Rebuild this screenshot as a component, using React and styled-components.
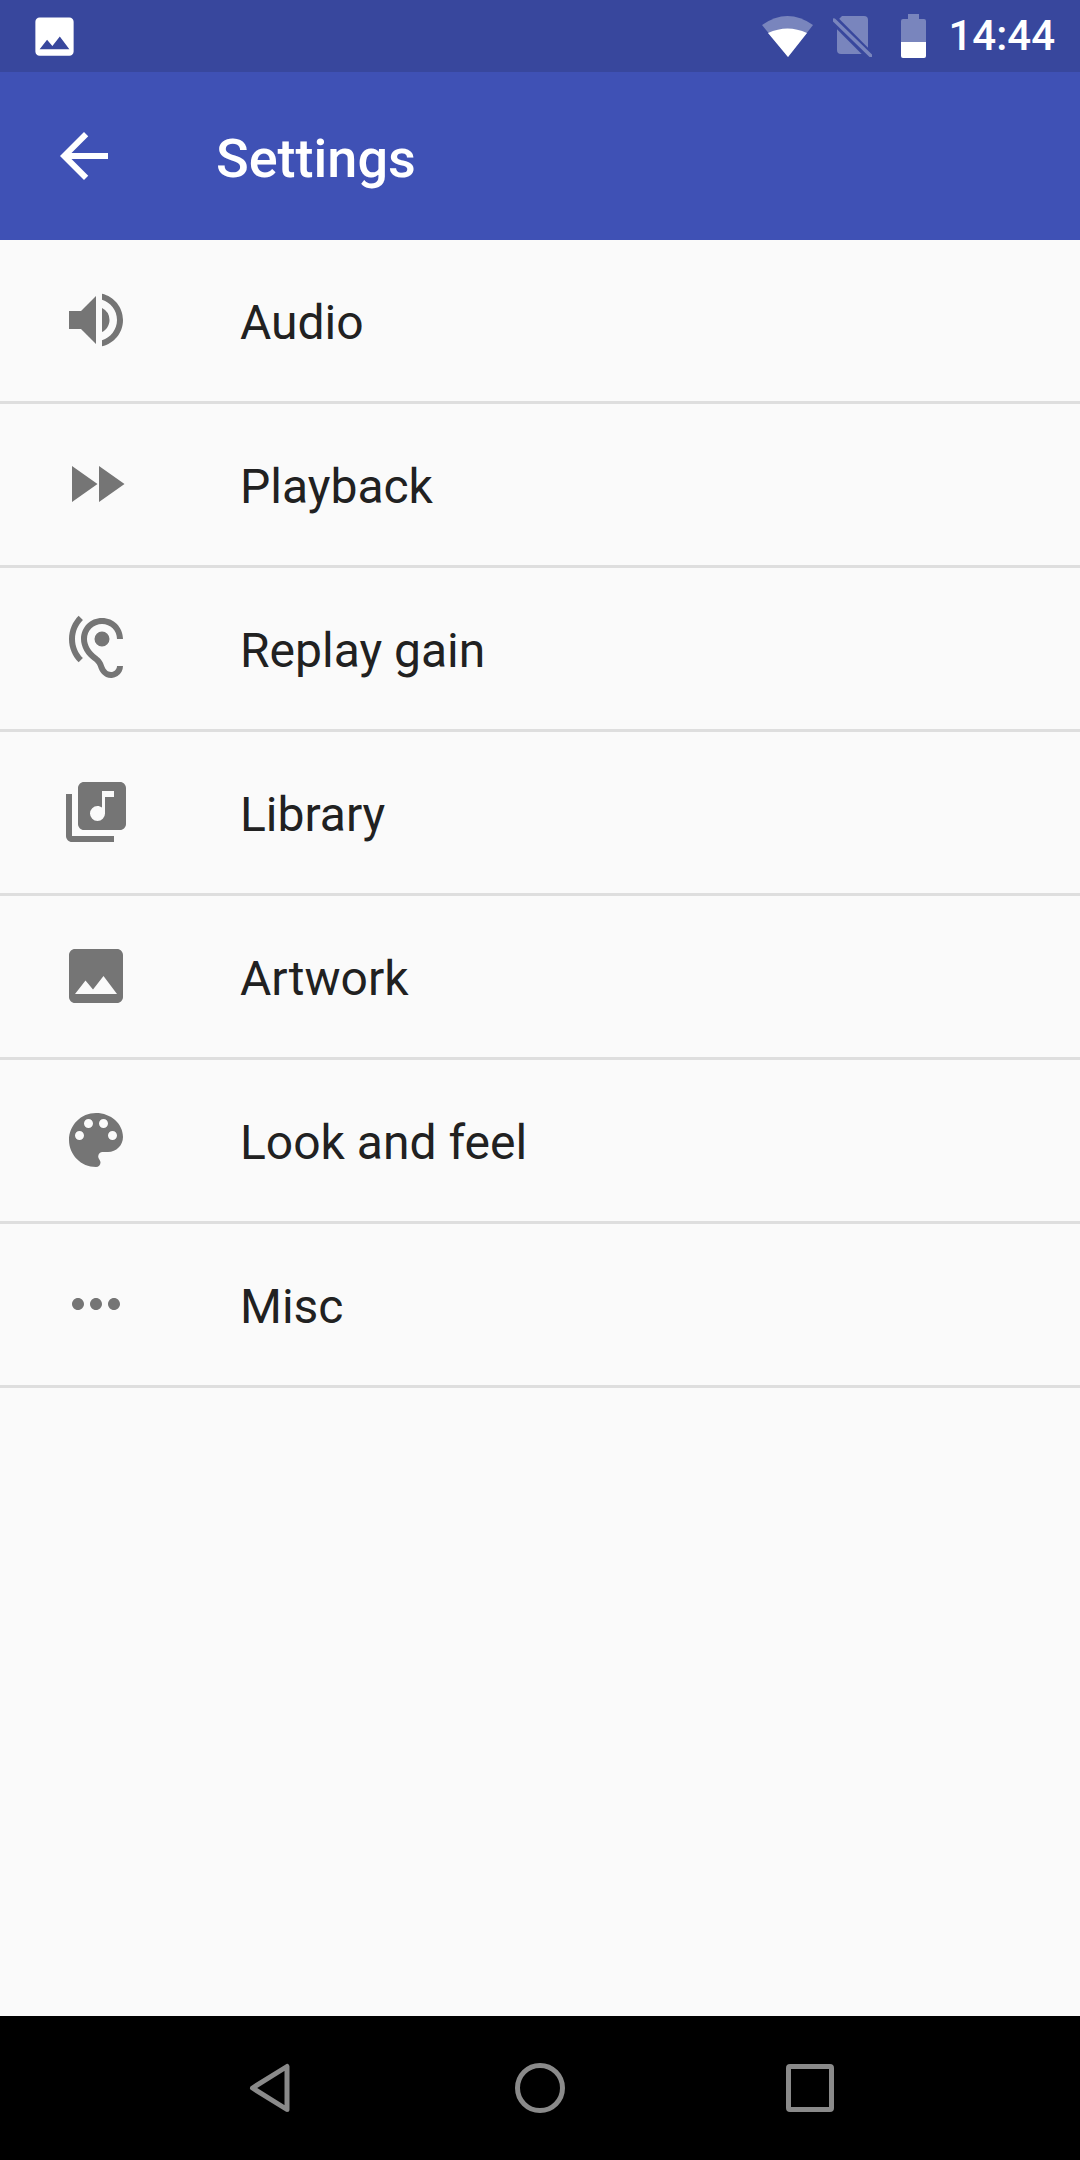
import React from "react";
import styled, { createGlobalStyle } from "styled-components";
import {
  MdArrowBack,
  MdVolumeUp,
  MdFastForward,
  MdHearing,
  MdLibraryMusic,
  MdImage,
  MdMoreHoriz,
} from "react-icons/md";

const Global = createGlobalStyle`
  html, body { margin: 0; padding: 0; background: #fafafa; }
  * { box-sizing: border-box; }
`;

const Screen = styled.div`
  width: 1080px;
  height: 2160px;
  display: flex;
  flex-direction: column;
  background: #fafafa;
  font-family: Roboto, "Liberation Sans", sans-serif;
  overflow: hidden;
`;

const StatusBar = styled.div`
  height: 72px;
  flex: none;
  display: flex;
  align-items: center;
  padding: 0 25px 0 29px;
  background: #38479d;
  color: #fff;
`;

const StatusTray = styled.div`
  margin-left: auto;
  display: flex;
  align-items: center;
`;

const StatusGlyph = styled.svg`
  display: block;
  flex: none;
  margin-right: ${(p) => p.$gap}px;
`;

const Clock = styled.span`
  font-size: 42px;
  line-height: 72px;
  font-weight: 500;
`;

const Toolbar = styled.header`
  height: 168px;
  flex: none;
  display: flex;
  align-items: center;
  padding-left: 48px;
  background: #3f51b5;
  color: #fff;
`;

const BackButton = styled.div`
  width: 72px;
  height: 72px;
  margin-right: 96px;
  display: flex;
`;

const Title = styled.h1`
  margin: 0;
  padding-top: 6px;
  font-size: 54px;
  line-height: 72px;
  font-weight: 500;
`;

const List = styled.main`
  flex: 1;
  display: flex;
  flex-direction: column;
`;

const Row = styled.div`
  height: 164px;
  flex: none;
  display: flex;
  align-items: center;
  gap: 108px;
  padding: 0 0 1px 60px;
  border-bottom: 3px solid #dedede;
  color: #757575;
`;

const Label = styled.span`
  padding-top: 5px;
  font-size: 48px;
  line-height: 64px;
  color: #212121;
`;

const NavBar = styled.nav`
  height: 144px;
  flex: none;
  display: flex;
  align-items: center;
  padding: 0 135px;
  background: #000;
`;

const NavSlot = styled.div`
  flex: 1;
  display: flex;
  justify-content: center;
`;

const NavGlyph = styled.svg`
  display: block;
  fill: none;
  stroke: #8a8a8a;
  stroke-width: 5;
  stroke-linejoin: round;
`;

const PaletteIcon = () => (
  <svg width="72" height="72" viewBox="0 0 24 24" fill="currentColor">
    <path d="M12 3c-4.97 0-9 4.03-9 9s4.03 9 9 9c.83 0 1.5-.67 1.5-1.5 0-.39-.15-.74-.39-1.01-.23-.26-.38-.61-.38-.99 0-.83.67-1.5 1.5-1.5H16c2.76 0 5-2.24 5-5 0-4.42-4.03-8-9-8zm-5.5 9c-.83 0-1.5-.67-1.5-1.5S5.67 9 6.5 9 8 9.67 8 10.5 7.33 12 6.5 12zm3-4C8.67 8 8 7.33 8 6.5S8.67 5 9.5 5s1.5.67 1.5 1.5S10.33 8 9.5 8zm5 0c-.83 0-1.5-.67-1.5-1.5S13.67 5 14.5 5s1.5.67 1.5 1.5S15.33 8 14.5 8zm3 4c-.83 0-1.5-.67-1.5-1.5S16.67 9 17.5 9s1.5.67 1.5 1.5-.67 1.5-1.5 1.5z" />
  </svg>
);

const rows = [
  ["Audio", <MdVolumeUp size={72} />],
  ["Playback", <MdFastForward size={72} />],
  ["Replay gain", <MdHearing size={72} />],
  ["Library", <MdLibraryMusic size={72} />],
  ["Artwork", <MdImage size={72} />],
  ["Look and feel", <PaletteIcon />],
  ["Misc", <MdMoreHoriz size={72} />],
];

export default function App() {
  return (
    <Screen>
      <Global />
      <StatusBar>
        <MdImage size={51} />
        <StatusTray>
          <StatusGlyph $gap={20} width="51" height="41" viewBox="762 14 51 41">
            <path d="M762 23Q787.5 5 813 23L788 55Z" fill="#7985bd" />
            <path d="M768 31Q787.5 22 807 31L788 55Z" fill="#fff" />
          </StatusGlyph>
          <StatusGlyph $gap={29} width="39" height="42" viewBox="833 15 39 42">
            <path d="M842 16H864a4 4 0 0 1 4 4V50a4 4 0 0 1-4 4H841a4 4 0 0 1-4-4V21Z" fill="#7985bd" />
            <path d="M831 17L872 58" stroke="#38479d" strokeWidth="9" />
            <path d="M834 20L871 56" stroke="#7985bd" strokeWidth="3.5" strokeLinecap="round" />
          </StatusGlyph>
          <StatusGlyph $gap={22} width="25" height="44" viewBox="901 14 25 44">
            <path d="M908 14H919V19H924a2 2 0 0 1 2 2V42H901V21a2 2 0 0 1 2-2H908Z" fill="#7985bd" />
            <path d="M901 42H926V56a2 2 0 0 1-2 2H903a2 2 0 0 1-2-2Z" fill="#fff" />
          </StatusGlyph>
          <Clock>14:44</Clock>
        </StatusTray>
      </StatusBar>
      <Toolbar>
        <BackButton>
          <MdArrowBack size={72} />
        </BackButton>
        <Title>Settings</Title>
      </Toolbar>
      <List>
        {rows.map(([label, icon]) => (
          <Row key={label}>
            {icon}
            <Label>{label}</Label>
          </Row>
        ))}
      </List>
      <NavBar>
        <NavSlot>
          <NavGlyph width="42" height="50" viewBox="0 0 42 50">
            <path d="M38 3.5V46.5L3.5 25Z" />
          </NavGlyph>
        </NavSlot>
        <NavSlot>
          <NavGlyph width="50" height="50" viewBox="0 0 50 50">
            <circle cx="25" cy="25" r="22.5" />
          </NavGlyph>
        </NavSlot>
        <NavSlot>
          <NavGlyph width="48" height="48" viewBox="0 0 48 48">
            <rect x="2.5" y="2.5" width="43" height="43" rx="1.5" />
          </NavGlyph>
        </NavSlot>
      </NavBar>
    </Screen>
  );
}
